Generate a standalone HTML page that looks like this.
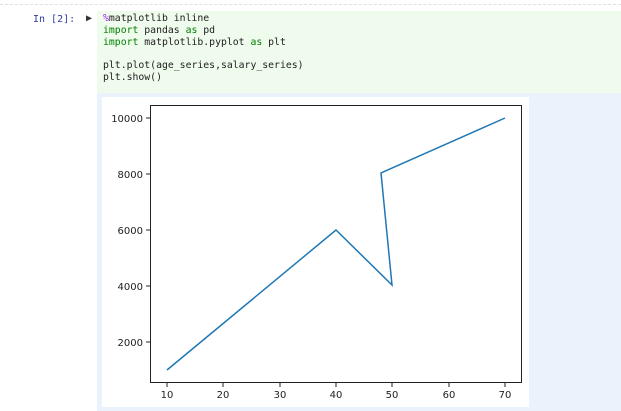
<!DOCTYPE html>
<html><head><style>
body{margin:0;width:621px;height:411px;background:#fff;position:relative;overflow:hidden;font-family:"DejaVu Sans Mono","Liberation Mono",monospace}
.dash{position:absolute;left:0;top:4px;width:621px;border-top:1px dashed #e0e0e0}
.prompt{position:absolute;left:33px;top:14px;font-size:10px;color:#303f9f}
.run{position:absolute;left:86px;top:13px;font-size:10px;color:#333}
.cell{position:absolute;left:97px;top:11px;width:524px;height:82px;background:#effbec}
.code{position:absolute;left:103px;top:13px;font-size:9.8px;line-height:11.8px;color:#222;white-space:pre}
.k{color:#008000}.m{color:#aa22ff}
.out{position:absolute;left:97px;top:93px;width:524px;height:318px;background:#eaf2fb}
.img{position:absolute;left:102px;top:97px;width:427px;height:310px;background:#fff}
svg{position:absolute;left:0;top:0}
svg text{font-family:"DejaVu Sans",sans-serif;font-size:10px;fill:#222}
</style></head><body>
<div class="dash"></div>
<div class="prompt">In [2]:</div>
<div class="run">&#9654;</div>
<div class="cell"></div>
<div class="code"><span class="m">%</span>matplotlib inline
<span class="k">import</span> pandas <span class="k">as</span> pd
<span class="k">import</span> matplotlib.pyplot <span class="k">as</span> plt

plt.plot(age_series,salary_series)
plt.show()</div>
<div class="out"></div>
<div class="img"></div>
<svg width="621" height="411">
<rect x="150.5" y="105.5" width="371" height="277" fill="none" stroke="#222" stroke-width="1"/>
<g stroke="#222">
<line x1="146" y1="118" x2="150" y2="118"/><line x1="146" y1="174" x2="150" y2="174"/><line x1="146" y1="230" x2="150" y2="230"/><line x1="146" y1="286" x2="150" y2="286"/><line x1="146" y1="342" x2="150" y2="342"/>
<line x1="167" y1="383" x2="167" y2="387"/><line x1="223" y1="383" x2="223" y2="387"/><line x1="280" y1="383" x2="280" y2="387"/><line x1="336" y1="383" x2="336" y2="387"/><line x1="392" y1="383" x2="392" y2="387"/><line x1="449" y1="383" x2="449" y2="387"/><line x1="505" y1="383" x2="505" y2="387"/>
</g>
<g text-anchor="end">
<text x="143" y="122">10000</text><text x="143" y="178">8000</text><text x="143" y="234">6000</text><text x="143" y="290">4000</text><text x="143" y="346">2000</text>
</g>
<g text-anchor="middle">
<text x="167" y="398">10</text><text x="223" y="398">20</text><text x="280" y="398">30</text><text x="336" y="398">40</text><text x="392" y="398">50</text><text x="449" y="398">60</text><text x="505" y="398">70</text>
</g>
<polyline points="167,370 336,230 392,285 381,173 505,118" fill="none" stroke="#1f77b4" stroke-width="1.5"/>
</svg>
</body></html>
